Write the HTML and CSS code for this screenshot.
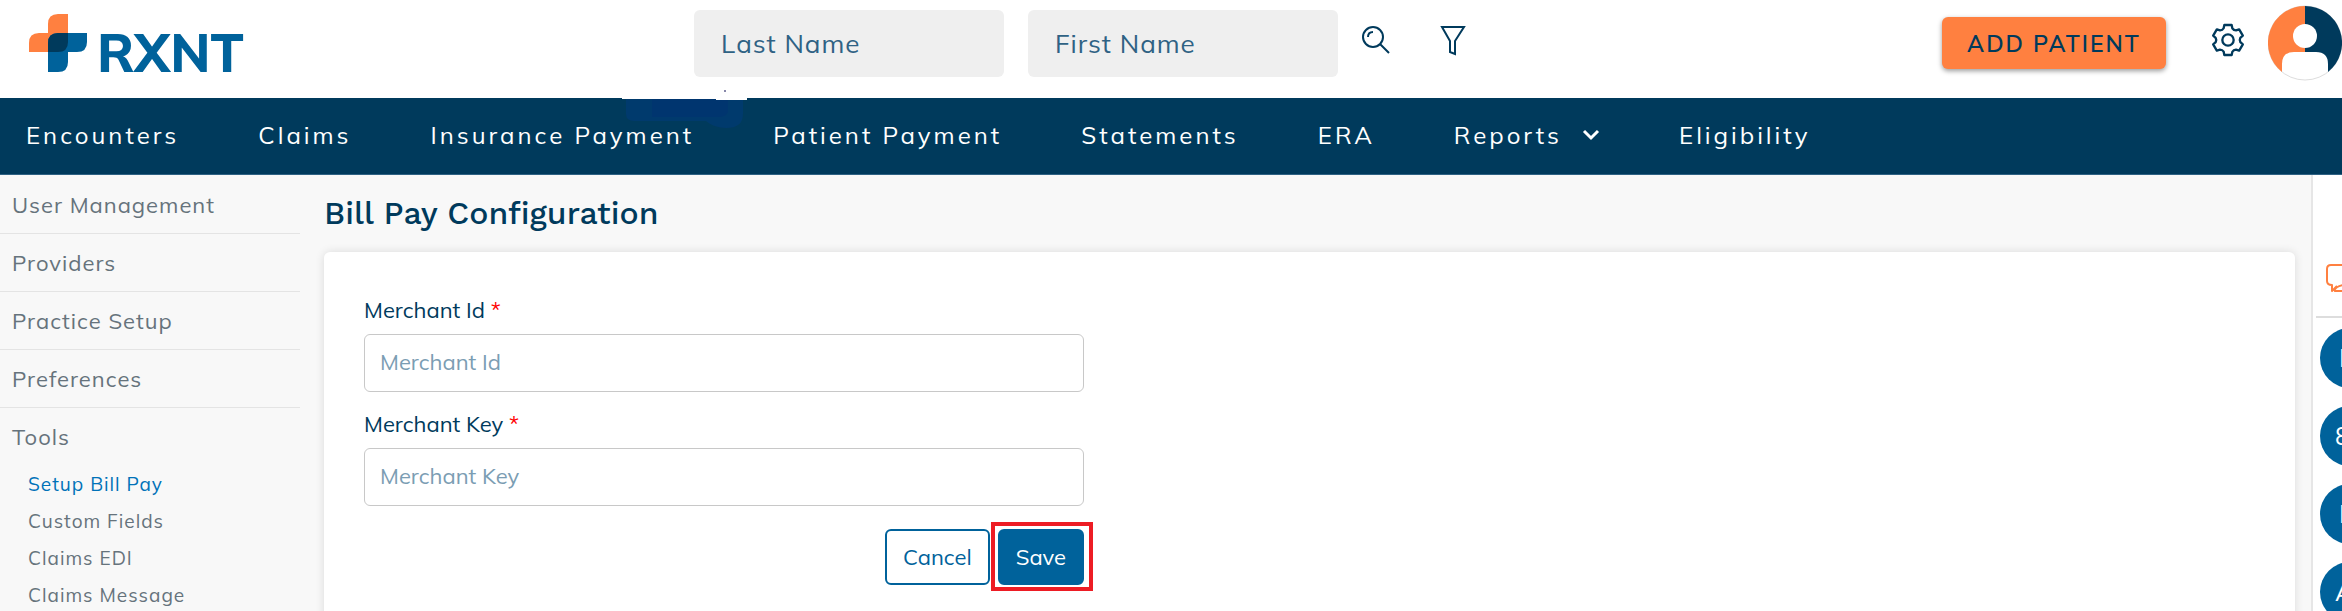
FILE: index.html
```html
<!DOCTYPE html>
<html lang="en">
<head>
    <meta charset="UTF-8">
    <meta name="viewport" content="width=device-width, initial-scale=1.0">
    <title>RXNT - Bill Pay Configuration</title>
    <link rel="stylesheet" href="styles.css">
</head>
<body>
    <header class="topbar">
        <a class="logo" href="#" aria-label="RXNT home">
            <svg class="logo-mark" viewBox="0 0 58 58" aria-hidden="true">
                <path fill="#ff8040" d="M19 19V10Q19 0 29 0H39V29Q39 38 29 38H0V29Q0 19 10 19Z"/>
                <path fill="#00629b" d="M58 19V28Q58 38 48 38H39V48Q39 58 29 58H19V29Q19 19 29 19Z"/>
                <path fill="#003a5c" d="M39 19V28Q39 38 29 38H19V29Q19 19 29 19Z"/>
            </svg>
            <span class="logo-text">RXNT</span>
        </a>

        <form class="search">
            <input class="search-input" type="text" placeholder="Last Name" aria-label="Last Name">
            <input class="search-input" type="text" placeholder="First Name" aria-label="First Name">
            <button class="icon-btn" type="button" aria-label="Search">
                <svg width="30" height="30" viewBox="0 0 30 30" fill="none" stroke="#003a5c" stroke-width="2">
                    <circle cx="11" cy="12" r="10"/>
                    <path d="M6 12Q6 7 11 7M18 19L27 28"/>
                </svg>
            </button>
            <button class="icon-btn icon-filter" type="button" aria-label="Filter">
                <svg width="26" height="32" viewBox="0 0 26 32" fill="none" stroke="#003a5c" stroke-width="2">
                    <path d="M2 2H24L15 16V29L10 27V16Z"/>
                </svg>
            </button>
        </form>

        <div class="account">
            <button class="add-patient" type="button">ADD PATIENT</button>
            <button class="icon-btn" type="button" aria-label="Settings">
                <svg width="34" height="34" viewBox="-51 -51 102 102" fill="none" stroke="#003a5c" stroke-width="7" stroke-linejoin="round">
                    <path d="M-11 -45L11 -45L13 -35Q17 -29 24 -29L33.5 -32L44.5 -13L36.8 -6.2Q33.6 0 37.1 6.3L44.5 13L33.5 32L23.8 28.8Q16.6 29.2 13.1 35.3L11 45L-11 45L-13 35Q-17 29 -24 29L-33.5 32L-44.5 13L-36.8 6.2Q-33.6 0 -37.1 -6.3L-44.5 -13L-33.5 -32L-23.8 -28.8Q-16.6 -29.2 -13.1 -35.3Z"/>
                    <circle r="17"/>
                </svg>
            </button>
            <button class="icon-btn" type="button" aria-label="Profile">
                <svg width="74" height="76" viewBox="0 0 74 76">
                    <circle cx="37" cy="38" r="37" fill="#fff" stroke="#ddd" stroke-width="1"/>
                    <path fill="#ff8040" d="M37 1A37 37 0 0 0 14 67V59Q14 47 26 47H37Z"/>
                    <path fill="#003a5c" d="M37 1A37 37 0 0 1 60 67V59Q60 47 48 47H37Z"/>
                    <circle cx="37" cy="31" r="12" fill="#fff"/>
                </svg>
            </button>
        </div>
    </header>

    <nav class="navbar">
        <svg class="nav-patch" width="128" height="50" viewBox="0 0 128 50" aria-hidden="true">
            <path fill="#003a6d" d="M4 21H121V36Q121 50 104 50Q92 50 84 43H12Q4 43 4 36Z"/>
            <path fill="#00356f" d="M30 21H106V34Q104 39 96 39H30Z"/>
            <path fill="#fff" d="M0 20H125V22H94V21H0Z"/>
            <path fill="#88a" d="M102 12H104V14H102Z"/>
        </svg>
        <a href="#">Encounters</a>
        <a href="#">Claims</a>
        <a href="#">Insurance Payment</a>
        <a href="#">Patient Payment</a>
        <a href="#">Statements</a>
        <a href="#">ERA</a>
        <a href="#">Reports
            <svg width="18" height="12" viewBox="0 0 18 12" fill="none" stroke="#fff" stroke-width="3" aria-hidden="true">
                <path d="M2 2L9 9L16 2"/>
            </svg>
        </a>
        <a href="#">Eligibility</a>
    </nav>

    <div class="layout">
        <aside class="sidebar">
            <a class="side-link" href="#">User Management</a>
            <a class="side-link" href="#">Providers</a>
            <a class="side-link" href="#">Practice Setup</a>
            <a class="side-link" href="#">Preferences</a>
            <a class="side-link" href="#">Tools</a>
            <div class="submenu">
                <a class="active" href="#">Setup Bill Pay</a>
                <a href="#">Custom Fields</a>
                <a href="#">Claims EDI</a>
                <a href="#">Claims Message</a>
            </div>
        </aside>

        <main class="content">
            <h1>Bill Pay Configuration</h1>
            <section class="card">
                <form class="config-form">
                    <label for="merchant-id">Merchant Id <span class="required">*</span></label>
                    <input type="text" id="merchant-id" placeholder="Merchant Id">
                    <label for="merchant-key">Merchant Key <span class="required">*</span></label>
                    <input type="text" id="merchant-key" placeholder="Merchant Key">
                    <div class="actions">
                        <button class="btn" type="button">Cancel</button>
                        <button class="btn btn-save" type="button">Save</button>
                    </div>
                </form>
            </section>
        </main>

        <aside class="rail">
            <button class="chat-btn" type="button" aria-label="Messages">
                <svg width="40" height="30" viewBox="0 0 40 30" fill="none" stroke="#ff8040" stroke-width="2" stroke-linejoin="round">
                    <path d="M17 22H34Q38 22 38 17V6Q38 2 33 2H6Q2 2 2 6V18Q2 22 7 22V28L12 23"/>
                    <path d="M9 28Q11 23 18 22M9 28H20"/>
                </svg>
            </button>
            <div class="bubble bubble-narrow">I</div>
            <div class="bubble">8</div>
            <div class="bubble bubble-narrow">I</div>
            <div class="bubble">A</div>
        </aside>
    </div>
</body>
</html>
```
FILE: styles.css
```css
* {
    margin: 0;
    padding: 0;
    box-sizing: border-box;
}

body {
    font-family: Mulish, Muli, Lato, sans-serif;
    background: #f8f8f8;
    color: #003a5c;
    height: 100vh;
    overflow: hidden;
    display: flex;
    flex-direction: column;
}

a {
    color: inherit;
    text-decoration: none;
}

button,
input {
    font-family: inherit;
}

/* Top bar */
.topbar {
    display: grid;
    grid-template-columns: 665px auto 1fr;
    flex: none;
    height: 98px;
    padding-left: 29px;
    background: #fff;
}

.logo {
    display: flex;
    align-items: flex-start;
    align-self: start;
    gap: 10px;
    margin-top: 14px;
}

.logo-mark {
    width: 58px;
    height: 58px;
}

.logo-text {
    color: #00629b;
    font-size: 53px;
    font-weight: 800;
    line-height: 60px;
    padding-top: 8px;
}

.search {
    display: flex;
    align-items: flex-start;
    gap: 24px;
    padding-top: 10px;
}

.search-input {
    width: 310px;
    height: 67px;
    padding: 0 27px;
    border: none;
    border-radius: 6px;
    background: #efefef;
    color: #003a5c;
    font-size: 26px;
    letter-spacing: 1px;
}

.search-input::placeholder {
    color: #2f6284;
    opacity: 1;
}

.icon-btn {
    display: flex;
    border: none;
    background: none;
    cursor: pointer;
}

.search .icon-btn {
    margin-top: 15px;
}

.search .icon-filter {
    margin-left: 24px;
}

.account {
    display: flex;
    align-items: center;
    align-self: start;
    justify-content: flex-end;
    margin-top: 5px;
}

.add-patient {
    height: 52px;
    width: 224px;
    margin-right: 45px;
    border: none;
    border-radius: 6px;
    background: #ff8040;
    box-shadow: 0 2px 5px rgba(0, 0, 0, 0.4);
    color: #003a5c;
    font-size: 23px;
    font-weight: 600;
    letter-spacing: 2px;
    cursor: pointer;
}

.account .icon-btn:nth-child(2) {
    margin: 0 23px 6px 0;
}

/* Navigation */
.navbar {
    position: relative;
    display: flex;
    align-items: center;
    flex: none;
    gap: 79px;
    height: 77px;
    padding: 0 26px 2px;
    border-bottom: 1px solid #2f6284;
    background: #003a5c;
    color: #fff;
    font-size: 24px;
    letter-spacing: 3px;
    white-space: nowrap;
}

.navbar a {
    display: flex;
    align-items: center;
    gap: 20px;
}

.nav-patch {
    position: absolute;
    top: -20px;
    left: 622px;
}

/* Page body */
.layout {
    display: flex;
    flex: 1;
    min-height: 0;
}

.sidebar {
    flex: none;
    width: 300px;
    padding-top: 1px;
    color: #66737c;
    letter-spacing: 1px;
}

.side-link {
    display: block;
    height: 58px;
    padding-left: 12px;
    border-bottom: 1px solid #e4e4e4;
    font-size: 22px;
    line-height: 58px;
}

.side-link:nth-child(5) {
    border-bottom: none;
}

.submenu {
    display: flex;
    flex-direction: column;
    padding-left: 28px;
    font-size: 19px;
    line-height: 37px;
}

.submenu .active {
    color: #0072b8;
}

.content {
    display: flex;
    flex-direction: column;
    flex: 1;
    padding: 16px 16px 0 24px;
}

.content h1 {
    margin-bottom: 16px;
    font-family: "Work Sans", Inter, sans-serif;
    font-size: 32px;
    font-weight: 500;
    line-height: 45px;
}

.card {
    flex: 1;
    padding: 42px 40px;
    border-radius: 6px 6px 0 0;
    background: #fff;
    box-shadow: 0 0 10px rgba(0, 0, 0, 0.12);
}

.config-form {
    display: flex;
    flex-direction: column;
    max-width: 720px;
    font-size: 22px;
}

.config-form label {
    line-height: 32px;
    margin-bottom: 8px;
}

.required {
    color: #f00;
}

.config-form input {
    height: 58px;
    margin-bottom: 16px;
    padding: 0 15px 2px;
    border: 1px solid #c8c8c8;
    border-radius: 6px;
    color: #003a5c;
    font-size: 22px;
}

.config-form input::placeholder {
    color: #7b9db3;
    opacity: 1;
}

.actions {
    display: flex;
    justify-content: flex-end;
    gap: 8px;
    margin-top: 7px;
}

.btn {
    height: 56px;
    padding: 0 16px;
    border: 2px solid #00629b;
    border-radius: 6px;
    background: #fff;
    color: #00629b;
    font-size: 22px;
    cursor: pointer;
}

.btn-save {
    position: relative;
    background: #00629b;
    color: #fff;
}

/* Red marker around the save button */
.btn-save::after {
    content: "";
    position: absolute;
    inset: -9px -11px -8px -9px;
    border: 4px solid #ed1c24;
}

/* Right rail, runs off the window edge */
.rail {
    display: flex;
    flex-direction: column;
    flex: none;
    width: 31px;
    overflow: hidden;
    border-left: 2px solid #e6e6e6;
    background: #fff;
}

.chat-btn {
    display: flex;
    align-items: flex-start;
    flex: none;
    width: 60px;
    height: 143px;
    margin: 0 0 10px 3px;
    padding: 88px 0 0 9px;
    border: none;
    border-bottom: 2px solid #ddd;
    background: none;
}

.chat-btn svg {
    flex: none;
}

.bubble {
    flex: none;
    width: 60px;
    height: 60px;
    margin: 0 0 18px 7px;
    padding-left: 15px;
    border-radius: 50%;
    background: #00629b;
    color: #fff;
    font-size: 25px;
    line-height: 60px;
}

.bubble-narrow {
    padding-left: 19px;
}
```
